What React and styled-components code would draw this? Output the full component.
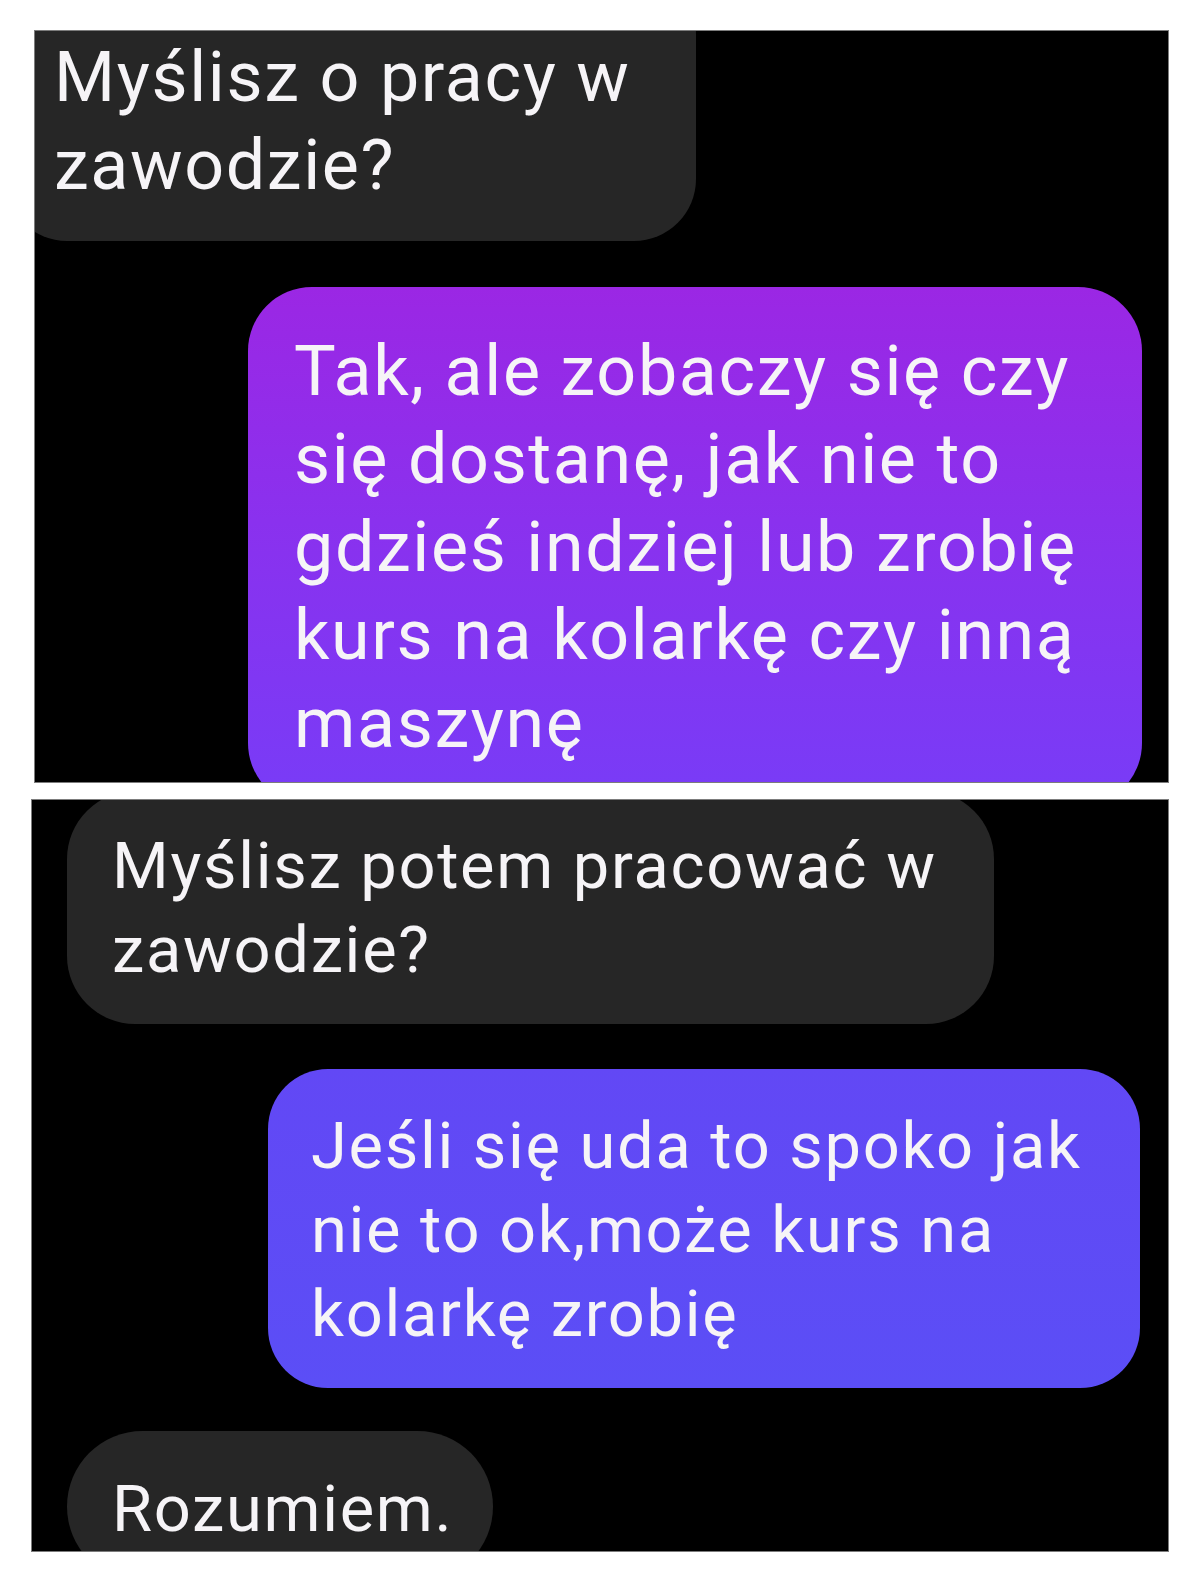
import React from 'react';
import styled, { createGlobalStyle } from 'styled-components';

const GlobalStyle = createGlobalStyle`
  html, body {
    margin: 0;
    padding: 0;
    background: #ffffff;
  }
  body {
    font-family: Roboto, "Noto Sans", "Liberation Sans", sans-serif;
    -webkit-font-smoothing: antialiased;
  }
`;

const Page = styled.div`
  display: flex;
  flex-direction: column;
  align-items: flex-start;
  gap: 16px;
  padding-top: 30px;
  width: 1200px;
  min-height: 1582px;
  box-sizing: border-box;
`;

// one cropped screenshot of the chat
const Shot = styled.section`
  display: flex;
  flex-direction: column;
  margin-left: ${(p) => p.left}px;
  width: ${(p) => p.width}px;
  height: 753px;
  box-sizing: border-box;
  background: #000;
  border: 1px solid #7c7c7c;
  overflow: hidden;
  font-size: ${(p) => p.size}px;
  line-height: ${(p) => p.line}px;
  letter-spacing: ${(p) => p.track}px;
`;

const Bubble = styled.div`
  flex: none;
  box-sizing: border-box;
  width: ${(p) => p.width}px;
  align-self: ${(p) => (p.mine ? 'flex-end' : 'flex-start')};
  margin: ${(p) => p.margin};
  padding: ${(p) => p.pad};
  border-radius: ${(p) => p.radius || 62}px;
  color: #f6f4f7;
  white-space: nowrap;
  background: ${(p) =>
    p.tone === 'purple'
      ? 'linear-gradient(180deg, #9b27e4 0%, #8a31ee 45%, #783cf7 100%)'
      : p.tone === 'blue'
      ? 'linear-gradient(180deg, #6248f5 0%, #5b4ef6 100%)'
      : '#262626'};
`;

export default function App() {
  return (
    <>
      <GlobalStyle />
      <Page>
        <Shot left={34} width={1135} size={70} line={88} track={1.6}>
          <Bubble width={691} margin="-58px 0 0 -30px" pad="60px 40px 32px 49px" radius={62}>
            Myślisz o pracy w<br />
            zawodzie?
          </Bubble>
          <Bubble
            mine
            tone="purple"
            width={894}
            margin="46px 26px 0 0"
            pad="40px 40px 40px 46px"
            radius={64}
          >
            Tak, ale zobaczy się czy<br />
            się dostanę, jak nie to<br />
            gdzieś indziej lub zrobię<br />
            kurs na kolarkę czy inną<br />
            maszynę
          </Bubble>
        </Shot>

        <Shot left={31} width={1138} size={65} line={84} track={1.7}>
          <Bubble width={927} margin="-9px 0 0 35px" pad="33px 40px 32px 45px" radius={68}>
            Myślisz potem pracować w<br />
            zawodzie?
          </Bubble>
          <Bubble
            mine
            tone="blue"
            width={872}
            margin="45px 28px 0 0"
            pad="35px 40px 32px 43px"
            radius={60}
          >
            Jeśli się uda to spoko jak<br />
            nie to ok,może kurs na<br />
            kolarkę zrobię
          </Bubble>
          <Bubble width={426} margin="43px 0 0 35px" pad="36px 40px 31px 45px" radius={76}>
            Rozumiem.
          </Bubble>
        </Shot>
      </Page>
    </>
  );
}
